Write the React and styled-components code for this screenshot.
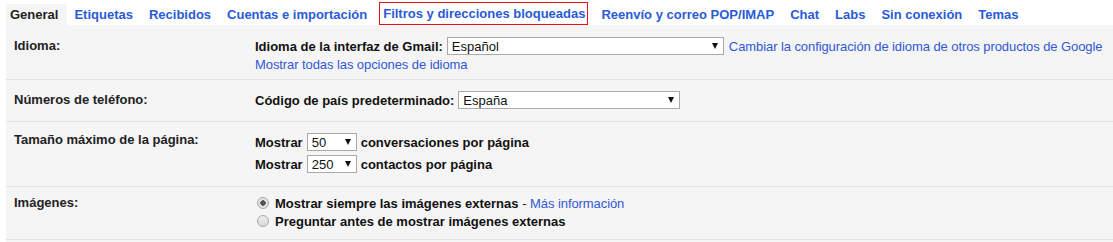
import React from "react";
import styled, { createGlobalStyle } from "styled-components";

const Global = createGlobalStyle`
	body {
		margin: 0;
		background: #fff;
		font-family: "Liberation Sans", Arial, sans-serif;
		font-size: 13px;
		color: #222;
	}
`;

const tabs = [
	"General",
	"Etiquetas",
	"Recibidos",
	"Cuentas e importación",
	"Filtros y direcciones bloqueadas",
	"Reenvío y correo POP/IMAP",
	"Chat",
	"Labs",
	"Sin conexión",
	"Temas",
];

const Select = ({ value, width }) => (
	<S.Select $width={width}>
		<span>{value}</span>
		<S.Arrow />
	</S.Select>
);

const Radio = ({ checked, children }) => (
	<S.Line $h={18}>
		<S.RadioDot $checked={checked} />
		{children}
	</S.Line>
);

const App = () => {
	return (
		<>
			<Global />
			<S.TabBar>
				{tabs.map((t, i) => (
					<S.Tab key={t} $active={i === 0} $marked={i === 4}>
						{t}
					</S.Tab>
				))}
			</S.TabBar>
			<S.Panel>
				<S.Row $top={10} $bottom={8}>
					<S.Label $h={22}>Idioma:</S.Label>
					<div>
						<S.Line $h={22}>
							<b>Idioma de la interfaz de Gmail:</b>
							<Select value="Español" width={277} />
							<S.Link>Cambiar la configuración de idioma de otros productos de Google</S.Link>
						</S.Line>
						<S.Line $h={14}>
							<S.Link $flush>Mostrar todas las opciones de idioma</S.Link>
						</S.Line>
					</div>
				</S.Row>
				<S.Row $top={9} $bottom={10}>
					<S.Label $h={22}>Números de teléfono:</S.Label>
					<div>
						<S.Line $h={22}>
							<b>Código de país predeterminado:</b>
							<Select value="España" width={222} />
						</S.Line>
					</div>
				</S.Row>
				<S.Row $top={9} $bottom={11}>
					<S.Label $h={18}>Tamaño máximo de la página:</S.Label>
					<div>
						<S.Line $h={22}>
							<b>Mostrar</b>
							<Select value="50" width={50} />
							<b>conversaciones por página</b>
						</S.Line>
						<S.Line $h={22}>
							<b>Mostrar</b>
							<Select value="250" width={50} />
							<b>contactos por página</b>
						</S.Line>
					</div>
				</S.Row>
				<S.Row $top={7} $bottom={9}>
					<S.Label $h={18}>Imágenes:</S.Label>
					<div>
						<Radio checked>
							<b>Mostrar siempre las imágenes externas</b>
							<span>&nbsp;-&nbsp;</span>
							<S.Link $flush>Más información</S.Link>
						</Radio>
						<Radio>
							<b>Preguntar antes de mostrar imágenes externas</b>
						</Radio>
					</div>
				</S.Row>
			</S.Panel>
		</>
	);
};

const S = {
	TabBar: styled.div`
		display: flex;
		align-items: flex-end;
		padding: 4px 0 0 6px;
		height: 21px;
		background: #fff;
	`,
	Tab: styled.div`
		height: ${(p) => (p.$marked ? "22px" : "21px")};
		line-height: 21px;
		padding: ${(p) => (p.$marked ? "0 2px 0 3px" : "0 9px 0 4px")};
		margin-right: ${(p) => (p.$marked ? "9px" : "3px")};
		font-weight: bold;
		white-space: nowrap;
		color: ${(p) => (p.$active ? "#222" : "#2a5bd7")};
		background: ${(p) => (p.$active ? "#f5f5f5" : "transparent")};
		border: ${(p) => (p.$marked ? "1px solid #e8101c" : "none")};
		border-bottom: none;
		position: relative;
		${(p) =>
			p.$marked &&
			`
			&::after {
				content: "";
				position: absolute;
				left: -1px;
				right: -1px;
				bottom: 0;
				height: 1px;
				background: #e8101c;
			}
		`}
	`,
	Panel: styled.div`
		margin-left: 6px;
		background: #f5f5f5;
		height: 217px;
	`,
	Row: styled.div`
		display: grid;
		grid-template-columns: 241px 1fr;
		padding: ${(p) => p.$top}px 0 ${(p) => p.$bottom}px 8px;
		border-bottom: 1px solid #e3e3e3;
	`,
	Label: styled.div`
		font-weight: bold;
		line-height: ${(p) => p.$h}px;
	`,
	Line: styled.div`
		display: flex;
		align-items: center;
		height: ${(p) => p.$h}px;
		white-space: nowrap;
		b {
			font-weight: bold;
			color: #111;
		}
	`,
	Link: styled.span`
		color: #3158d6;
		letter-spacing: -0.08px;
		margin-left: ${(p) => (p.$flush ? "0" : "5px")};
		cursor: pointer;
	`,
	Select: styled.div`
		box-sizing: border-box;
		width: ${(p) => p.$width}px;
		height: 18px;
		margin-left: 4px;
		padding: 0 5px 0 4px;
		display: flex;
		align-items: center;
		justify-content: space-between;
		background: #fff;
		border: 1px solid #a9a9a9;
		color: #111;
		font-size: 13px;
		& + b {
			margin-left: 4px;
		}
	`,
	Arrow: styled.span`
		width: 0;
		height: 0;
		border-left: 3.5px solid transparent;
		border-right: 3.5px solid transparent;
		border-top: 6px solid #111;
	`,
	RadioDot: styled.span`
		box-sizing: border-box;
		width: 12px;
		height: 12px;
		border-radius: 50%;
		margin: 0 6px 0 2px;
		border: 1px solid #a8a8a8;
		background: ${(p) =>
			p.$checked
				? "radial-gradient(circle, #555 0 2.5px, #e6e6e6 3px, #dcdcdc 100%)"
				: "linear-gradient(#eee, #d8d8d8)"};
	`,
};

export default App;
